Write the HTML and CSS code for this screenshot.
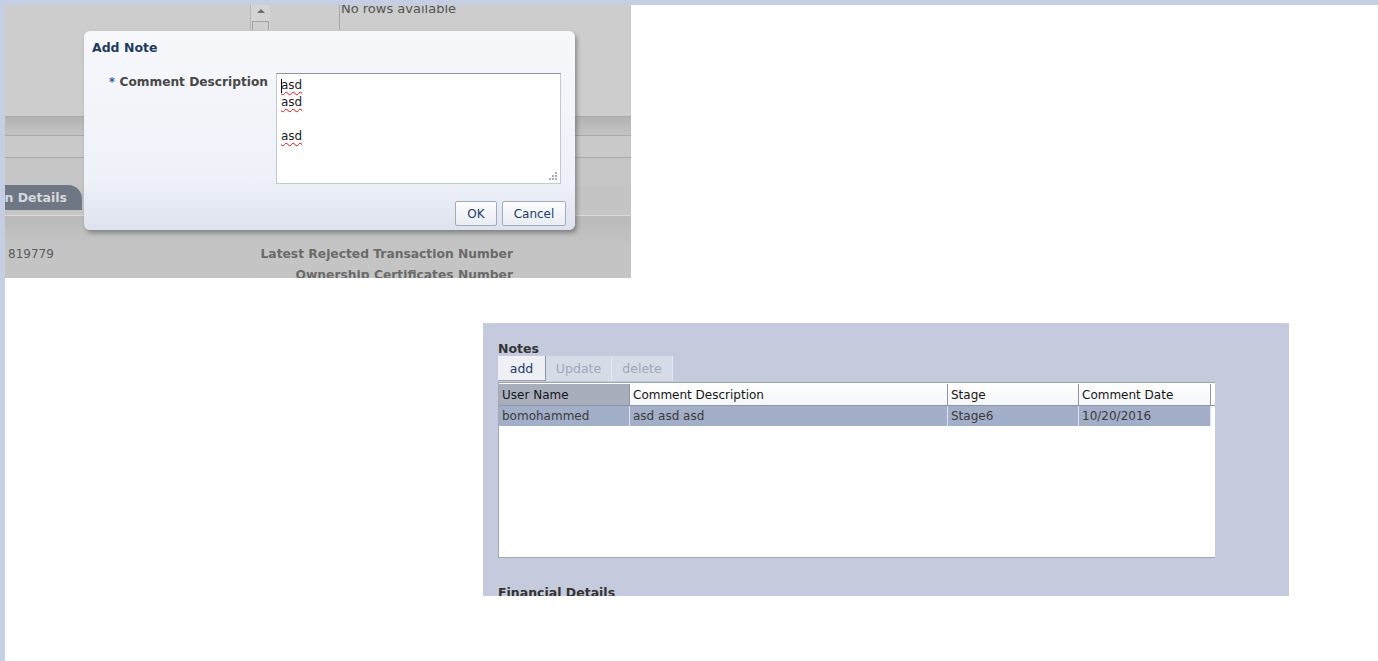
FILE: index.html
```html
<!DOCTYPE html>
<html>
<head>
<meta charset="utf-8">
<link rel="stylesheet" href="styles.css">
</head>
<body>
<div class="canvas">
  <div class="shot-top">
    <div class="upper">
      <div class="pane-left"></div>
      <div class="vscroll"><span class="arrow-up"></span><span class="thumb"></span></div>
      <div class="pane-mid"></div>
      <div class="norows">No rows available</div>
    </div>
    <div class="line"></div>
    <div class="band"></div>
    <div class="line"></div>
    <div class="strip1"></div>
    <div class="line"></div>
    <div class="strip2"></div>
    <div class="tabrow"><div class="tab"><span>Transaction Details</span></div></div>
    <div class="strip3"></div>
    <div class="line light"></div>
    <div class="lower">
      <div class="val">819779</div>
      <div class="lbl">Latest Rejected Transaction Number</div>
      <div class="val"></div>
      <div class="lbl">Ownership Certificates Number</div>
    </div>

    <div class="dialog">
      <div class="dlg-title">Add Note</div>
      <div class="dlg-form">
        <div class="dlg-label"><span class="req">*</span> Comment Description</div>
        <div class="textarea">
          <div class="ta-line"><span class="caret"></span><span class="sp">asd</span></div>
          <div class="ta-line"><span class="sp">asd</span></div>
          <div class="ta-line">&nbsp;</div>
          <div class="ta-line"><span class="sp">asd</span></div>
          <svg class="grip" width="10" height="10" viewBox="0 0 10 10">
            <rect x="8" y="2" width="2" height="2" fill="#a7abb3"/>
            <rect x="5" y="5" width="2" height="2" fill="#a7abb3"/>
            <rect x="8" y="5" width="2" height="2" fill="#a7abb3"/>
            <rect x="2" y="8" width="2" height="2" fill="#a7abb3"/>
            <rect x="5" y="8" width="2" height="2" fill="#a7abb3"/>
            <rect x="8" y="8" width="2" height="2" fill="#a7abb3"/>
          </svg>
        </div>
      </div>
      <div class="dlg-buttons">
        <div class="btn ok">OK</div>
        <div class="btn cancel">Cancel</div>
      </div>
    </div>
  </div>

  <div class="shot-bottom">
    <div class="sec-title">Notes</div>
    <div class="toolbar">
      <div class="tb-btn active">add</div>
      <div class="tb-btn disabled">Update</div>
      <div class="tb-btn disabled">delete</div>
    </div>
    <div class="table">
      <div class="row head">
        <div class="cell sorted">User Name</div>
        <div class="cell">Comment Description</div>
        <div class="cell">Stage</div>
        <div class="cell">Comment Date</div>
      </div>
      <div class="row data">
        <div class="cell">bomohammed</div>
        <div class="cell">asd asd asd</div>
        <div class="cell">Stage6</div>
        <div class="cell">10/20/2016</div>
      </div>
    </div>
    <div class="sec-title fin">Financial Details</div>
  </div>
</div>
</body>
</html>
```

FILE: styles.css
```css
html, body {
  margin: 0;
  padding: 0;
}
body {
  background: #c6cee6;
  font-family: "DejaVu Sans", Verdana, sans-serif;
  font-size: 12px;
  width: 1378px;
  height: 661px;
  overflow: hidden;
}
.canvas {
  margin: 5px 0 0 5px;
  background: #ffffff;
  height: 656px;
  overflow: hidden;
}

/* ---------- top screenshot ---------- */
.shot-top {
  position: relative;
  width: 626px;
  height: 273px;
  background: #c8c8c8;
  overflow: hidden;
}
.upper {
  display: flex;
  height: 111px;
  background: #cdcdcd;
}
.pane-left {
  width: 245px;
}
.vscroll {
  width: 19px;
  height: 25px;
  border-left: 1px solid #b4b4b4;
  background: #d4d4d4;
  display: flex;
  flex-direction: column;
  align-items: center;
}
.arrow-up {
  margin-top: 4px;
  width: 0;
  height: 0;
  border-left: 4px solid transparent;
  border-right: 4px solid transparent;
  border-bottom: 4px solid #6b6b6b;
}
.thumb {
  margin-top: 8px;
  width: 15px;
  height: 9px;
  border: 1px solid #a3a3a3;
  border-bottom: none;
  background: #cfcfcf;
}
.pane-mid {
  width: 69px;
}
.norows {
  height: 25px;
  border-left: 1px solid #a6a6a6;
  padding-left: 1px;
  color: #545454;
  font-size: 13px;
  line-height: 13px;
  overflow: hidden;
}
.norows::before {
  content: "";
  display: block;
  margin-top: -3px;
}
.line {
  height: 1px;
  background: #a9a9a9;
}
.line.light {
  background: #dadada;
}
.band {
  height: 18px;
  background: linear-gradient(#b2b2b2, #c4c4c4);
}
.strip1 {
  height: 21px;
  background: #c9c9c9;
}
.strip2 {
  height: 27px;
  background: #c6c6c6;
}
.tabrow {
  height: 25px;
  background: #c4c4c4;
}
.tab {
  width: 77px;
  height: 25px;
  background: #6f7784;
  border-top-right-radius: 14px;
  display: flex;
  justify-content: flex-end;
  align-items: center;
  overflow: hidden;
  white-space: nowrap;
}
.tab span {
  color: #d5d8de;
  font-weight: bold;
  font-size: 12.5px;
  padding-right: 15px;
}
.strip3 {
  height: 5px;
  background: #c6c6c6;
}
.lower {
  height: 80px;
  background: linear-gradient(#b9b9b9, #c4c4c4 30px, #c5c5c5);
  display: grid;
  grid-template-columns: 80px 428px;
  grid-auto-rows: 21px;
  padding-top: 31px;
  box-sizing: border-box;
}
.lower .val {
  color: #5b5b5b;
  padding-left: 3px;
  font-size: 12px;
}
.lower .lbl {
  color: #6a6a6a;
  font-weight: bold;
  text-align: right;
  font-size: 12.3px;
}

/* dialog (overlay) */
.dialog {
  position: absolute;
  left: 79px;
  top: 26px;
  width: 491px;
  height: 199px;
  box-sizing: border-box;
  background: linear-gradient(#f7f8fc, #eef1f8 150px, #dde2ee);
  border-radius: 6px;
  box-shadow: 2px 3px 4px rgba(60, 60, 60, 0.45);
  padding: 9px 9px 0 8px;
}
.dlg-title {
  color: #1e3a5f;
  font-weight: bold;
  font-size: 12.5px;
  line-height: 15px;
  height: 33px;
}
.dlg-form {
  display: grid;
  grid-template-columns: 176px 285px;
  column-gap: 8px;
}
.dlg-label {
  text-align: right;
  color: #474747;
  font-weight: bold;
  font-size: 12.2px;
  padding-top: 2px;
  white-space: nowrap;
}
.req {
  color: #3c64a5;
}
.textarea {
  position: relative;
  height: 111px;
  box-sizing: border-box;
  background: #ffffff;
  border: 1px solid #c4c8d0;
  border-top-color: #8e929b;
  padding: 3px 4px;
  color: #1b1b1b;
  font-size: 12px;
  line-height: 17px;
}
.ta-line {
  height: 17px;
  display: flex;
  align-items: center;
}
.sp {
  text-decoration: underline wavy #e01010;
  text-decoration-thickness: 1px;
  text-underline-offset: 2px;
}
.caret {
  width: 1px;
  height: 14px;
  background: #000;
  margin-right: -1px;
}
.grip {
  position: absolute;
  right: 3px;
  bottom: 3px;
}
.dlg-buttons {
  display: flex;
  justify-content: flex-end;
  gap: 5px;
  margin-top: 17px;
}
.btn {
  height: 25px;
  box-sizing: border-box;
  border: 1px solid #a4abb8;
  border-radius: 2px;
  background: linear-gradient(#fdfdfe, #e9ecf3);
  color: #213d68;
  font-size: 12px;
  display: flex;
  align-items: center;
  justify-content: center;
}
.btn.ok { width: 42px; }
.btn.cancel { width: 64px; }

/* ---------- bottom screenshot ---------- */
.shot-bottom {
  margin: 45px 0 0 478px;
  width: 806px;
  height: 273px;
  box-sizing: border-box;
  background: #c5cadc;
  padding: 18px 0 0 15px;
  overflow: hidden;
}
.sec-title {
  color: #333333;
  font-weight: bold;
  font-size: 12.5px;
  line-height: 15px;
}
.sec-title.fin {
  margin-top: 27px;
}
.toolbar {
  display: flex;
  height: 25px;
}
.tb-btn {
  height: 25px;
  box-sizing: border-box;
  display: flex;
  align-items: center;
  justify-content: center;
  font-size: 12.5px;
}
.tb-btn.active {
  width: 48px;
  background: #eef0f6;
  color: #1e3a66;
  border-right: 1px solid #8c93a4;
  border-bottom: 1px solid #9aa0b0;
}
.tb-btn.disabled {
  background: #d6dbe8;
  color: #a2a8b8;
  border-right: 1px solid #e4e7ef;
}
.tb-btn.disabled:nth-child(2) { width: 66px; }
.tb-btn.disabled:nth-child(3) { width: 61px; }
.table {
  width: 717px;
  height: 176px;
  box-sizing: border-box;
  background: #ffffff;
  border-left: 1px solid #a2a7b6;
  border-bottom: 1px solid #a2a7b6;
  border-top: 1px solid #9ea3b1;
  margin-top: 1px;
}
.row {
  display: grid;
  grid-template-columns: 131px 318px 131px 132px;
}
.row.head {
  height: 23px;
  border-bottom: 1px solid #8f95a5;
  box-sizing: border-box;
  padding-top: 1px;
}
.row.head .cell {
  background: linear-gradient(#ffffff, #f4f5f8);
  border-right: 1px solid #8e94a3;
  color: #161616;
}
.row.head .cell.sorted {
  background: #a8aebc;
}
.cell {
  padding-left: 3px;
  display: flex;
  align-items: center;
  font-size: 12px;
  white-space: nowrap;
  overflow: hidden;
}
.row.data {
  height: 20px;
}
.row.data .cell {
  background: #a3aec9;
  color: #3a3a3a;
  border-right: 1px solid #dde2ee;
}
```
